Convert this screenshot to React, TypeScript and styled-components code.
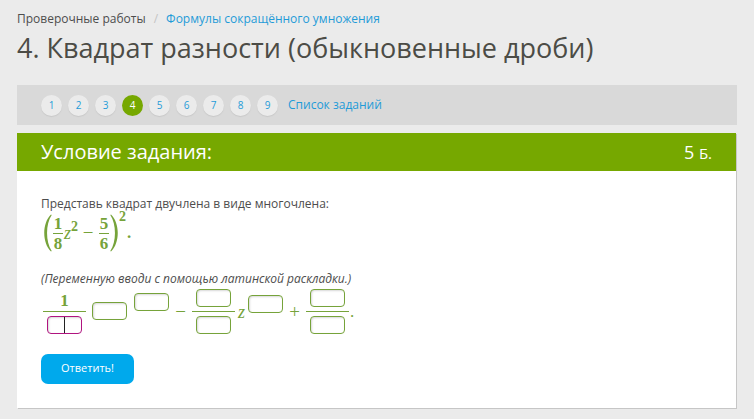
import React from "react";
import styled, { createGlobalStyle, css } from "styled-components";

const GlobalStyle = createGlobalStyle`
  * { box-sizing: border-box; }
  body {
    margin: 0;
    background: #ebebeb;
    color: #4d4d4d;
    font: 12px/18px "Open Sans", "Noto Sans", sans-serif;
  }
`;

const Page = styled.div`
  padding: 10px 17px 10px;
`;

const Breadcrumbs = styled.nav`
  display: flex;
  gap: 8px;
`;

const Separator = styled.span`
  color: #c4c4c4;
`;

const Link = styled.a`
  color: #1f9bd8;
  text-decoration: none;
`;

const Title = styled.h1`
  margin: 0 0 17px;
  font-size: 27px;
  line-height: 40px;
  font-weight: 400;
  color: #4c4c46;
`;

const Pager = styled.nav`
  display: flex;
  align-items: center;
  gap: 6px;
  height: 40px;
  margin-bottom: 8px;
  padding: 0 24px;
  background: #d9d9d9;
`;

const PageDot = styled.a<{ $active?: boolean }>`
  flex: none;
  width: 21px;
  height: 21px;
  border-radius: 50%;
  background: ${(p) => (p.$active ? "#76a800" : "#ebebeb")};
  color: ${(p) => (p.$active ? "#fff" : "#1f9bd8")};
  box-shadow: ${(p) => (p.$active ? "none" : "0 1px 1px #c8c8c8")};
  font-size: 10px;
  line-height: 21px;
  text-align: center;
  text-decoration: none;
`;

const ListLink = styled(Link)`
  margin-left: 4px;
`;

const Card = styled.main`
  background: #fff;
  box-shadow: 1px 1px 0 #c6c6c6;
  margin-right: 1px;
`;

const CardHeader = styled.header`
  display: flex;
  align-items: center;
  justify-content: space-between;
  height: 38px;
  padding: 0 24px;
  background: #76a800;
  color: #fff;
`;

const CardTitle = styled.h2`
  margin: 0;
  font-size: 20px;
  line-height: 38px;
  font-weight: 400;
`;

const Points = styled.span`
  font-size: 18px;
  line-height: 38px;
`;

const PointsUnit = styled.small`
  font-size: 15px;
`;

const CardBody = styled.form`
  padding: 24px;
`;

const Text = styled.p`
  margin: 0;
`;

const Hint = styled(Text)`
  margin-top: 17px;
  font-style: italic;
`;

const mathFont = css`
  font-family: "Liberation Serif", serif;
  color: #76a33a;
`;

const Formula = styled.div`
  ${mathFont}
  display: flex;
  align-items: center;
  height: 40px;
  padding-left: 2px;
  font-size: 17px;
  font-weight: 700;
`;

const ParenShape = styled.svg`
  flex: none;
  width: 9px;
  height: 38px;
  fill: currentColor;
`;

const Fraction = styled.span`
  display: grid;
  justify-items: center;
  width: 10px;
  margin: 0 1px;
  line-height: 19px;
`;

const Bar = styled.span`
  justify-self: stretch;
  height: 1px;
  background: #76a33a;
`;

const Variable = styled.i`
  font-size: 18px;
  font-weight: 400;
`;

const Power = styled.sup<{ $lift: number }>`
  padding-bottom: ${(p) => p.$lift}px;
  font-size: 14px;
  line-height: 14px;
`;

const Operator = styled.span`
  width: 20px;
  font-size: 19px;
  text-align: center;
  font-weight: 400;
`;

const Period = styled.span`
  padding-left: 1px;
`;

const Answer = styled.div`
  ${mathFont}
  display: flex;
  align-items: center;
  width: max-content;
  margin: 1px 0 20px;
  padding-left: 2px;
  font-size: 17px;
  line-height: 18px;

  ${Operator} { width: 23px; }
  ${Variable} { width: 13px; text-align: center; }
`;

const AnswerFraction = styled.span`
  display: grid;
  grid-template-rows: 18px 1px 18px;
  row-gap: 4px;
  justify-items: center;
  width: 43px;
`;

const Numerator = styled.span`
  font-weight: 700;
  line-height: 24px;
`;

const Field = styled.input<{ $focused?: boolean }>`
  display: block;
  width: 35px;
  height: 18px;
  padding: 0 2px;
  border: 1px solid ${(p) => (p.$focused ? "#b0147f" : "#76a33a")};
  border-radius: 4px;
  background: #fff;
  box-shadow: inset 1px 1px 2px #d8d8d8;
  font: 12px/14px "Open Sans", sans-serif;
  color: #333;
  outline: none;
`;

const FocusedField = styled.label`
  display: grid;
  place-items: center;

  > * { grid-area: 1 / 1; }
`;

const Caret = styled.span`
  width: 1px;
  height: 16px;
  background: #222;
`;

const Factor = styled.span`
  padding: 0 7px 2px 6px;
`;

const Exponent = styled.span<{ $lift: number }>`
  padding-bottom: ${(p) => p.$lift}px;
`;

const Submit = styled.button`
  display: block;
  width: 93px;
  height: 30px;
  padding: 0 0 2px;
  border: 0;
  border-radius: 7px;
  background: #00a9ec;
  color: #fff;
  font: 11px/18px "Open Sans", sans-serif;
`;

const tasks = [1, 2, 3, 4, 5, 6, 7, 8, 9];

function Bracket({ side }: { side: "left" | "right" }) {
  return (
    <ParenShape viewBox="0 0 9 38" aria-hidden="true">
      <path
        d={
          side === "left"
            ? "M8 0.5C-1 9 -1 29 8 37.5L8.7 37C2.5 28 2.5 10 8.7 1Z"
            : "M1 0.5C10 9 10 29 1 37.5L0.3 37C6.5 28 6.5 10 0.3 1Z"
        }
      />
    </ParenShape>
  );
}

export default function App() {
  return (
    <>
      <GlobalStyle />
      <Page>
        <Breadcrumbs>
          <span>Проверочные работы</span>
          <Separator>/</Separator>
          <Link href="#topic">Формулы сокращённого умножения</Link>
        </Breadcrumbs>
        <Title>4. Квадрат разности (обыкновенные дроби)</Title>
        <Pager>
          {tasks.map((n) => (
            <PageDot key={n} href={`#task-${n}`} $active={n === 4}>
              {n}
            </PageDot>
          ))}
          <ListLink href="#tasks">Список заданий</ListLink>
        </Pager>
        <Card>
          <CardHeader>
            <CardTitle>Условие задания:</CardTitle>
            <Points>
              5 <PointsUnit>Б.</PointsUnit>
            </Points>
          </CardHeader>
          <CardBody onSubmit={(e: React.FormEvent) => e.preventDefault()}>
            <Text>Представь квадрат двучлена в виде многочлена:</Text>
            <Formula>
              <Bracket side="left" />
              <Fraction>
                <span>1</span>
                <Bar />
                <span>8</span>
              </Fraction>
              <Variable>z</Variable>
              <Power $lift={12}>2</Power>
              <Operator>−</Operator>
              <Fraction>
                <span>5</span>
                <Bar />
                <span>6</span>
              </Fraction>
              <Bracket side="right" />
              <Power $lift={32}>2</Power>
              <Period>.</Period>
            </Formula>
            <Hint>(Переменную вводи с помощью латинской раскладки.)</Hint>
            <Answer>
              <AnswerFraction>
                <Numerator>1</Numerator>
                <Bar />
                <FocusedField>
                  <Field $focused aria-label="Знаменатель первой дроби" />
                  <Caret />
                </FocusedField>
              </AnswerFraction>
              <Factor>
                <Field aria-label="Переменная" />
              </Factor>
              <Exponent $lift={20}>
                <Field aria-label="Степень переменной" />
              </Exponent>
              <Operator>−</Operator>
              <AnswerFraction>
                <Field aria-label="Числитель второй дроби" />
                <Bar />
                <Field aria-label="Знаменатель второй дроби" />
              </AnswerFraction>
              <Variable>z</Variable>
              <Exponent $lift={16}>
                <Field aria-label="Степень z" />
              </Exponent>
              <Operator>+</Operator>
              <AnswerFraction>
                <Field aria-label="Числитель третьей дроби" />
                <Bar />
                <Field aria-label="Знаменатель третьей дроби" />
              </AnswerFraction>
              <Period>.</Period>
            </Answer>
            <Submit type="submit">Ответить!</Submit>
          </CardBody>
        </Card>
      </Page>
    </>
  );
}
